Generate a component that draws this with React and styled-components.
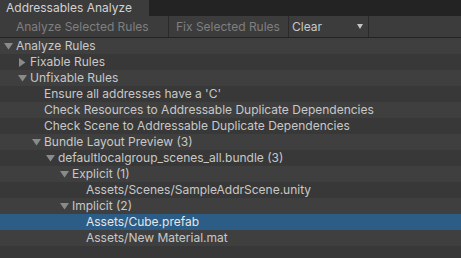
import React from 'react';
import styled, { createGlobalStyle } from 'styled-components';

const GlobalStyle = createGlobalStyle`
  html, body { margin: 0; padding: 0; background: #383838; }
  body { font-family: Inter, "Noto Sans", sans-serif; font-size: 12px; }
`;

const rows = [
  { label: 'Analyze Rules', depth: 0, arrow: 'open' },
  { label: 'Fixable Rules', depth: 1, arrow: 'closed' },
  { label: 'Unfixable Rules', depth: 1, arrow: 'open' },
  { label: "Ensure all addresses have a 'C'", depth: 2 },
  { label: 'Check Resources to Addressable Duplicate Dependencies', depth: 2 },
  { label: 'Check Scene to Addressable Duplicate Dependencies', depth: 2 },
  { label: 'Bundle Layout Preview (3)', depth: 2, arrow: 'open' },
  { label: 'defaultlocalgroup_scenes_all.bundle (3)', depth: 3, arrow: 'open' },
  { label: 'Explicit (1)', depth: 4, arrow: 'open' },
  { label: 'Assets/Scenes/SampleAddrScene.unity', depth: 5 },
  { label: 'Implicit (2)', depth: 4, arrow: 'open' },
  { label: 'Assets/Cube.prefab', depth: 5, selected: true },
  { label: 'Assets/New Material.mat', depth: 5 },
  { label: '', depth: 0 },
];

function App() {
  return (
    <Window>
      <GlobalStyle />
      <TabBar>
        <Tab>Addressables Analyze</Tab>
      </TabBar>
      <Toolbar>
        <ToolButton $width={164} $pad={11}>Analyze Selected Rules</ToolButton>
        <ToolButton $width={120} $pad={7}>Fix Selected Rules</ToolButton>
        <Dropdown>
          <span>Clear</span>
          <Caret />
        </Dropdown>
      </Toolbar>
      <Tree>
        {rows.map((r, i) => (
          <Row key={i} $odd={i % 2 === 1} $selected={r.selected}>
            <Indent $depth={r.depth} />
            <Arrow>
              {r.arrow === 'open' && (
                <svg width="9" height="8" viewBox="0 0 9 8">
                  <path d="M0 1 L9 1 L4.5 7.5 Z" fill="#8a8a8a" />
                </svg>
              )}
              {r.arrow === 'closed' && (
                <svg width="8" height="9" viewBox="0 0 8 9">
                  <path d="M1 0 L7.5 4.5 L1 9 Z" fill="#8a8a8a" />
                </svg>
              )}
            </Arrow>
            <Label $selected={r.selected}>{r.label}</Label>
          </Row>
        ))}
      </Tree>
    </Window>
  );
}

const Window = styled.div`
  width: 461px;
  height: 258px;
  overflow: hidden;
  background: #383838;
  display: flex;
  flex-direction: column;
`;

const TabBar = styled.div`
  height: 16px;
  background: #232323;
  display: flex;
`;

const Tab = styled.div`
  width: 143px;
  padding-left: 6px;
  background: #3c3c3c;
  color: #d2d2d2;
  font-size: 12px;
  line-height: 16px;
`;

const Toolbar = styled.div`
  height: 21px;
  background: #3c3c3c;
  border-bottom: 1px solid #232323;
  display: flex;
  padding-left: 5px;
`;

const ToolButton = styled.div`
  width: ${p => p.$width}px;
  padding-left: ${p => p.$pad}px;
  box-sizing: border-box;
  border-right: 1px solid #2a2a2a;
  color: #7f7f7f;
  line-height: 21px;
  white-space: nowrap;
  overflow: hidden;
`;

const Dropdown = styled.div`
  width: 80px;
  border-right: 1px solid #2a2a2a;
  color: #c8c8c8;
  line-height: 21px;
  padding: 0 5px 0 3px;
  display: flex;
  align-items: center;
  justify-content: space-between;
  box-sizing: border-box;
`;

const Caret = styled.span`
  width: 0;
  height: 0;
  border-left: 3.5px solid transparent;
  border-right: 3.5px solid transparent;
  border-top: 5px solid #c4c4c4;
`;

const Tree = styled.div`
  flex: 1;
  display: flex;
  flex-direction: column;
`;

const Row = styled.div`
  height: 16px;
  flex-shrink: 0;
  display: flex;
  align-items: center;
  background: ${p => (p.$selected ? '#2c5d87' : p.$odd ? '#383838' : '#3f3f3f')};
`;

const Indent = styled.div`
  width: ${p => 3 + p.$depth * 14}px;
  flex-shrink: 0;
`;

const Arrow = styled.div`
  width: 13px;
  height: 16px;
  flex-shrink: 0;
  display: flex;
  align-items: center;
  justify-content: flex-start;
  padding-left: 1px;
  box-sizing: border-box;
`;

const Label = styled.span`
  color: ${p => (p.$selected ? '#e6e6e6' : '#c8c8c8')};
  white-space: nowrap;
  line-height: 16px;
`;

export default App;
